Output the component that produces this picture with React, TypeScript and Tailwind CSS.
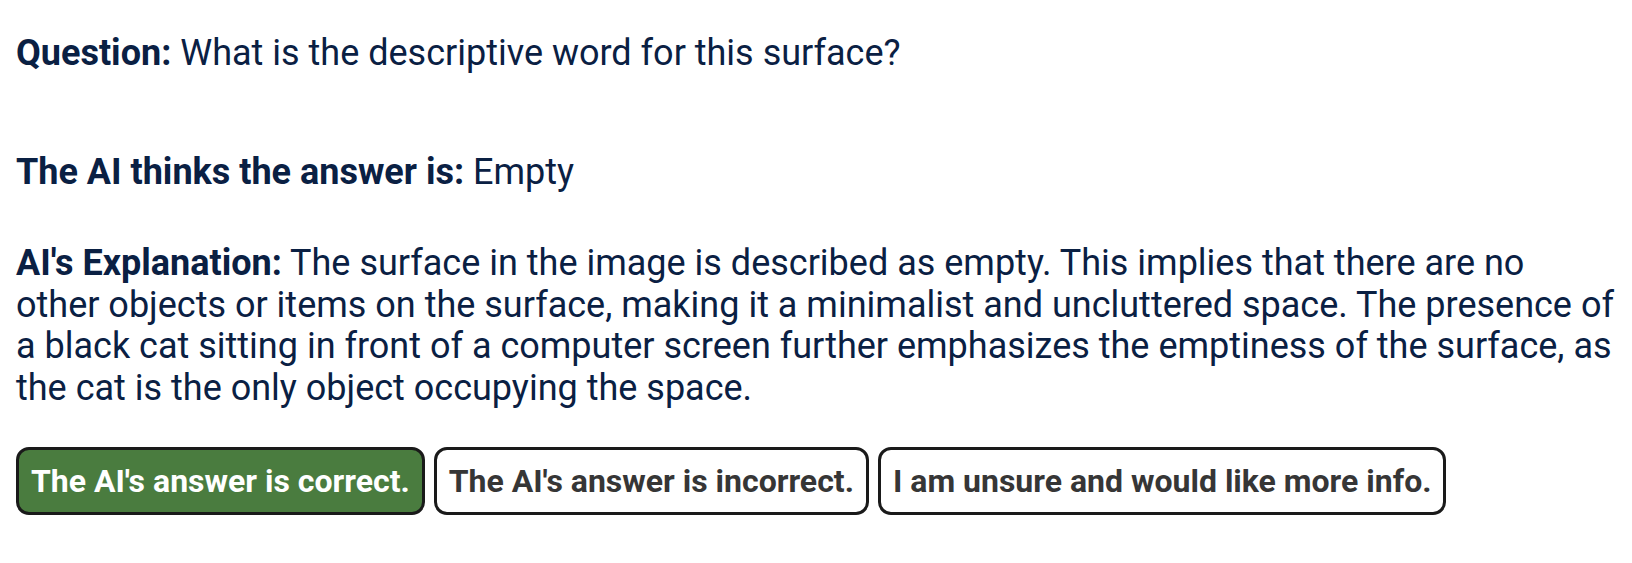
const OPTIONS = [
  { label: "The AI's answer is correct.", selected: true },
  { label: "The AI's answer is incorrect.", selected: false },
  { label: 'I am unsure and would like more info.', selected: false },
]

export default function App() {
  return (
    <div className="min-h-screen bg-white px-4 pt-[33px] text-[36px] leading-[41.6px] text-[#0a2043] font-['Roboto',sans-serif]">
      <p>
        <span className="font-bold">Question:</span> What is the descriptive word for this surface?
      </p>
      <p className="mt-[77px]">
        <span className="font-bold">The AI thinks the answer is:</span> Empty
      </p>
      <p className="mt-[50px]">
        <span className="font-bold">AI's Explanation:</span> The surface in the image is described as
        empty. This implies that there are no other objects or items on the surface, making it a
        minimalist and uncluttered space. The presence of a black cat sitting in front of a computer
        screen further emphasizes the emptiness of the surface, as the cat is the only object
        occupying the space.
      </p>
      <div className="mt-[37px] flex gap-[9px]">
        {OPTIONS.map((o) => (
          <button
            key={o.label}
            type="button"
            className={`rounded-[13px] border-[3px] border-[#1a1a1a] px-3 py-[12px] text-[32px] leading-[38px] font-bold ${
              o.selected ? 'bg-[#4a7c3f] text-white' : 'bg-white text-[#363636]'
            }`}
          >
            {o.label}
          </button>
        ))}
      </div>
    </div>
  )
}
